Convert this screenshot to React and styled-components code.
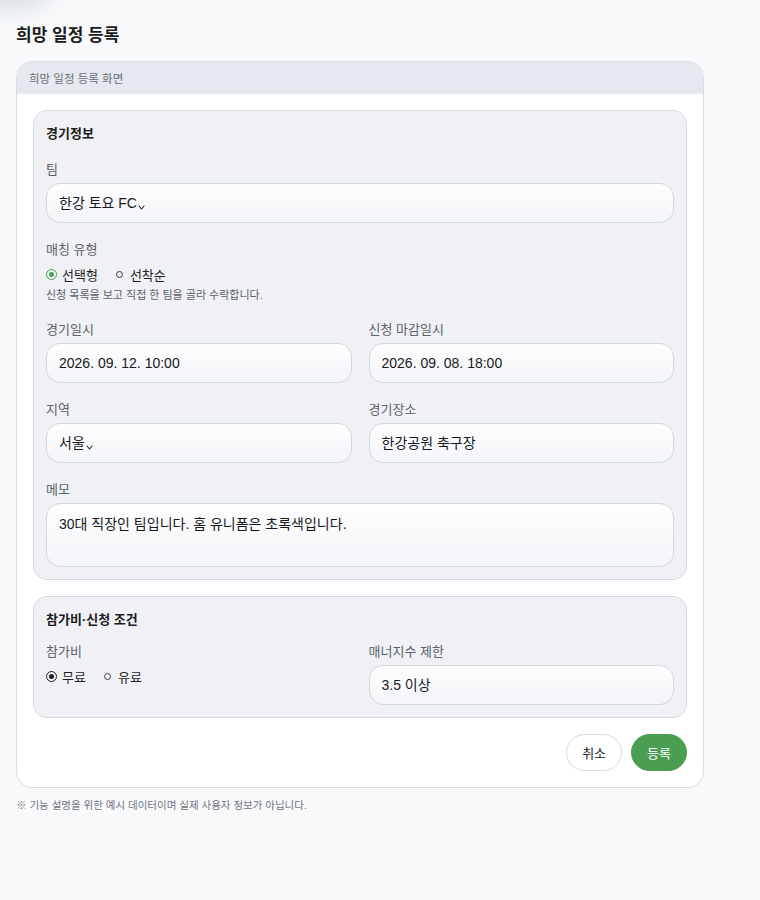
import React from "react";
import styled, { createGlobalStyle, css } from "styled-components";

const Global = createGlobalStyle`
  html, body { margin: 0; padding: 0; background: #f7f9fb; }
  body {
    font-family: "Liberation Sans", "Noto Sans CJK KR", sans-serif;
    color: #1d1f23;
  }
  * { box-sizing: border-box; }
`;

const Page = styled.div`
  position: relative;
  padding: 24px 16px 40px;
  min-height: 900px;
`;

const Blob = styled.div`
  position: absolute;
  left: -30px;
  top: -30px;
  width: 80px;
  height: 40px;
  border-radius: 50%;
  background: rgba(170, 175, 182, 0.35);
  filter: blur(10px);
  pointer-events: none;
`;

const Title = styled.h1`
  margin: 0 0 13px;
  font-size: 17px;
  line-height: 24px;
  font-weight: 700;
  color: #1a1c20;
`;

const Card = styled.div`
  width: 688px;
  background: #fff;
  border: 1px solid #d9dde3;
  border-radius: 16px;
  overflow: hidden;
`;

const CardHeader = styled.div`
  height: 32px;
  display: flex;
  align-items: center;
  padding: 0 12px;
  background: #e5e8ee;
  font-size: 11.5px;
  color: #6b7078;
`;

const CardBody = styled.div`
  padding: 16px;
  display: flex;
  flex-direction: column;
  gap: 16px;
`;

const Section = styled.section`
  background: #eff1f5;
  border: 1px solid #d6dae0;
  border-radius: 14px;
  padding: 14px 12px 12px;
  display: flex;
  flex-direction: column;
  gap: ${(p) => p.$gap || "18px"};
`;

const SectionTitle = styled.h2`
  margin: 0;
  font-size: 13px;
  line-height: 18px;
  font-weight: 700;
  color: #1a1c20;
`;

const Grid = styled.div`
  display: grid;
  grid-template-columns: 1fr 1fr;
  column-gap: 17px;
  row-gap: 18px;
`;

const Field = styled.div`
  display: flex;
  flex-direction: column;
  gap: ${(p) => (p.$tight ? "6px" : "4px")};
  ${(p) => p.$full && css`grid-column: 1 / -1;`}
`;

const Label = styled.div`
  font-size: 13px;
  line-height: 18px;
  color: #5d6168;
`;

const Input = styled.div`
  height: ${(p) => (p.$tall ? "64px" : "40px")};
  border: 1px solid #d3d8de;
  border-radius: 14px;
  background: linear-gradient(#fdfdfe, #f3f5f8);
  padding: ${(p) => (p.$tall ? "10px 12px" : "0 12px")};
  display: flex;
  align-items: ${(p) => (p.$tall ? "flex-start" : "center")};
  font-size: 14px;
  line-height: 20px;
  color: #16181b;
`;

const Chevron = styled.svg`
  width: 7px;
  height: 5px;
  margin-left: 1px;
  margin-top: 9px;
`;

const RadioRow = styled.div`
  display: flex;
  align-items: center;
  gap: 16px;
  height: 18px;
`;

const RadioItem = styled.label`
  display: flex;
  align-items: center;
  gap: 5px;
  font-size: 13px;
  color: #1d1f23;
`;

const RadioDot = styled.span`
  display: inline-flex;
  align-items: center;
  justify-content: center;
  border-radius: 50%;
  ${(p) =>
    p.$checked
      ? css`
          width: 11px;
          height: 11px;
          border: 1.3px solid ${p.$color};
          &::after {
            content: "";
            width: 5px;
            height: 5px;
            border-radius: 50%;
            background: ${p.$color};
          }
        `
      : css`
          width: 7px;
          height: 7px;
          margin: 0 2px;
          border: 1px solid #3a3d42;
        `}
`;

const Help = styled.div`
  font-size: 11px;
  line-height: 16px;
  color: #5d6168;
  margin-top: -2px;
`;

const Actions = styled.div`
  display: flex;
  justify-content: flex-end;
  gap: 9px;
`;

const Button = styled.button`
  height: 37px;
  padding: 0 15px;
  border-radius: 19px;
  font-family: inherit;
  font-size: 13px;
  cursor: pointer;
  ${(p) =>
    p.$primary
      ? css`
          background: #4a9e52;
          border: 1px solid #4a9e52;
          color: #fff;
        `
      : css`
          background: #fff;
          border: 1px solid #d5d9de;
          color: #1d1f23;
        `}
`;

const Note = styled.p`
  margin: 10px 0 0;
  font-size: 10.5px;
  line-height: 14px;
  color: #6f737a;
`;

const Caret = () => (
  <Chevron viewBox="0 0 7 5" fill="none">
    <path d="M1 1 L3.5 4 L6 1" stroke="#222" strokeWidth="1.1" strokeLinecap="round" strokeLinejoin="round" />
  </Chevron>
);

export default function App() {
  return (
    <>
      <Global />
      <Page>
        <Blob />
        <Title>희망 일정 등록</Title>
        <Card>
          <CardHeader>희망 일정 등록 화면</CardHeader>
          <CardBody>
            <Section>
              <SectionTitle>경기정보</SectionTitle>
              <Field>
                <Label>팀</Label>
                <Input>
                  한강 토요 FC
                  <Caret />
                </Input>
              </Field>
              <Field $tight>
                <Label>매칭 유형</Label>
                <RadioRow>
                  <RadioItem>
                    <RadioDot $checked $color="#4a9e52" />
                    선택형
                  </RadioItem>
                  <RadioItem>
                    <RadioDot />
                    선착순
                  </RadioItem>
                </RadioRow>
                <Help>신청 목록을 보고 직접 한 팀을 골라 수락합니다.</Help>
              </Field>
              <Grid>
                <Field>
                  <Label>경기일시</Label>
                  <Input>2026. 09. 12. 10:00</Input>
                </Field>
                <Field>
                  <Label>신청 마감일시</Label>
                  <Input>2026. 09. 08. 18:00</Input>
                </Field>
                <Field>
                  <Label>지역</Label>
                  <Input>
                    서울
                    <Caret />
                  </Input>
                </Field>
                <Field>
                  <Label>경기장소</Label>
                  <Input>한강공원 축구장</Input>
                </Field>
                <Field $full>
                  <Label>메모</Label>
                  <Input $tall>30대 직장인 팀입니다. 홈 유니폼은 초록색입니다.</Input>
                </Field>
              </Grid>
            </Section>
            <Section $gap="14px">
              <SectionTitle>참가비·신청 조건</SectionTitle>
              <Grid>
                <Field $tight>
                  <Label>참가비</Label>
                  <RadioRow>
                    <RadioItem>
                      <RadioDot $checked $color="#1d1f23" />
                      무료
                    </RadioItem>
                    <RadioItem>
                      <RadioDot />
                      유료
                    </RadioItem>
                  </RadioRow>
                </Field>
                <Field>
                  <Label>매너지수 제한</Label>
                  <Input>3.5 이상</Input>
                </Field>
              </Grid>
            </Section>
            <Actions>
              <Button>취소</Button>
              <Button $primary>등록</Button>
            </Actions>
          </CardBody>
        </Card>
        <Note>※ 기능 설명을 위한 예시 데이터이며 실제 사용자 정보가 아닙니다.</Note>
      </Page>
    </>
  );
}
